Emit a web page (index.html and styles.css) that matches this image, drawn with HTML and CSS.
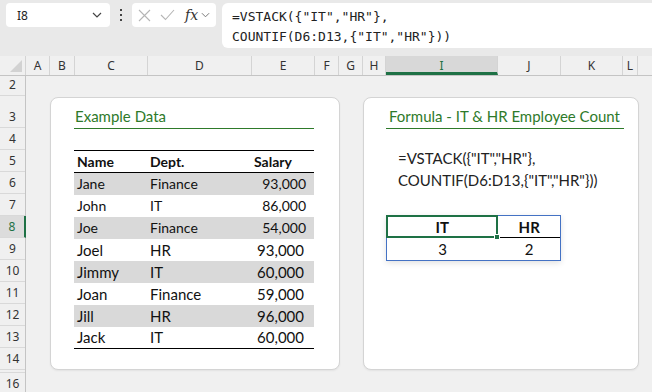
FILE: index.html
```html
<!DOCTYPE html>
<html lang="en">
<head>
    <meta charset="UTF-8">
    <title>VSTACK COUNTIF</title>
    <link rel="stylesheet" href="styles.css">
</head>
<body>
    <div class="topbar">
        <div class="namebox">
            <span>I8</span>
            <svg class="chev" width="10" height="6" viewBox="0 0 10 6"><path d="M1 1l4 4 4-4" fill="none" stroke="#444" stroke-width="1.2"/></svg>
        </div>
        <div class="dots"><i></i><i></i><i></i></div>
        <div class="fxbox">
            <svg width="13" height="13" viewBox="0 0 13 13"><path d="M1 1l11 11M12 1L1 12" stroke="#b5b5b5" stroke-width="1.1"/></svg>
            <svg width="15" height="12" viewBox="0 0 15 12"><path d="M1 6l4.5 4.5L14 1" fill="none" stroke="#b5b5b5" stroke-width="1.1"/></svg>
            <span class="fx">fx</span>
            <svg class="chev" width="9" height="6" viewBox="0 0 10 6"><path d="M1 1l4 4 4-4" fill="none" stroke="#777" stroke-width="1.1"/></svg>
        </div>
        <div class="formula">=VSTACK({"IT","HR"},<br>COUNTIF(D6:D13,{"IT","HR"}))</div>
    </div>

    <div class="colheads">
        <div class="corner"><span></span></div>
        <div class="ch w-a">A</div>
        <div class="ch w-b">B</div>
        <div class="ch w-c">C</div>
        <div class="ch w-d">D</div>
        <div class="ch w-e">E</div>
        <div class="ch w-f">F</div>
        <div class="ch w-g">G</div>
        <div class="ch w-h">H</div>
        <div class="ch w-i active">I</div>
        <div class="ch w-j">J</div>
        <div class="ch w-k">K</div>
        <div class="ch w-l">L</div>
        <div class="ch rest"></div>
    </div>

    <div class="sheet">
        <div class="rowheads">
            <div class="rh h20">2</div>
            <div class="rh h32">3</div>
            <div class="rh">4</div>
            <div class="rh">5</div>
            <div class="rh">6</div>
            <div class="rh">7</div>
            <div class="rh active">8</div>
            <div class="rh">9</div>
            <div class="rh">10</div>
            <div class="rh">11</div>
            <div class="rh">12</div>
            <div class="rh">13</div>
            <div class="rh">14</div>
            <div class="rh h3"></div>
            <div class="rh">16</div>
        </div>

        <div class="canvas">
            <div class="card card-left">
                <div class="title">Example Data</div>
                <table class="data">
                    <thead>
                        <tr><th class="c1">Name</th><th class="c2">Dept.</th><th class="c3">Salary</th></tr>
                    </thead>
                    <tbody>
                        <tr class="sm alt"><td>Jane</td><td>Finance</td><td class="num">93,000</td></tr>
                        <tr class="sm"><td>John</td><td>IT</td><td class="num">86,000</td></tr>
                        <tr class="sm alt"><td>Joe</td><td>Finance</td><td class="num">54,000</td></tr>
                        <tr><td>Joel</td><td>HR</td><td class="num">93,000</td></tr>
                        <tr class="alt"><td>Jimmy</td><td>IT</td><td class="num">60,000</td></tr>
                        <tr><td>Joan</td><td>Finance</td><td class="num">59,000</td></tr>
                        <tr class="alt"><td>Jill</td><td>HR</td><td class="num">96,000</td></tr>
                        <tr><td>Jack</td><td>IT</td><td class="num">60,000</td></tr>
                    </tbody>
                </table>
            </div>

            <div class="card card-right">
                <div class="title">Formula - IT &amp; HR Employee Count</div>
                <div class="code">=VSTACK({"IT","HR"},<br>COUNTIF(D6:D13,{"IT","HR"}))</div>
                <div class="result">
                    <div class="r-head">
                        <div class="cell wide sel">IT<span class="handle"></span></div>
                        <div class="cell">HR</div>
                    </div>
                    <div class="r-row">
                        <div class="cell wide">3</div>
                        <div class="cell">2</div>
                    </div>
                </div>
            </div>
        </div>
    </div>
</body>
</html>
```

FILE: styles.css
```css
* {
    margin: 0;
    padding: 0;
    box-sizing: border-box;
}

body {
    width: 652px;
    height: 392px;
    overflow: hidden;
    background-color: #f0f0f0;
    font-family: "Noto Sans", sans-serif;
    color: #222;
}

/* formula bar */
.topbar {
    height: 56px;
    background-color: #e9e9e9;
    display: flex;
    align-items: flex-start;
    padding: 3px 0 0 6px;
}

.namebox {
    width: 104px;
    height: 24px;
    background-color: #fff;
    border-radius: 4px;
    display: flex;
    align-items: center;
    justify-content: space-between;
    padding: 0 8px 0 11px;
    font-size: 12px;
}

.dots {
    width: 22px;
    height: 24px;
    display: flex;
    flex-direction: column;
    align-items: center;
    justify-content: center;
    gap: 3px;
}

.dots i {
    width: 2px;
    height: 2px;
    background-color: #444;
}

.fxbox {
    width: 84px;
    height: 24px;
    background-color: #fff;
    border-radius: 4px;
    display: flex;
    align-items: center;
    gap: 9px;
    padding-left: 6px;
}

.fxbox .fx {
    font-family: "DejaVu Serif", serif;
    font-style: italic;
    font-size: 14px;
    color: #333;
    margin-left: 1px;
    margin-right: -6px;
}

.formula {
    flex: 1;
    margin-left: 6px;
    height: 45px;
    background-color: #fff;
    border-radius: 6px 0 0 6px;
    padding: 4px 0 0 10px;
    font-family: "DejaVu Sans Mono", monospace;
    font-size: 13px;
    line-height: 20px;
    color: #222;
}

/* column headers */
.colheads {
    display: flex;
    height: 20px;
    background-color: #f0f0f0;
    border-bottom: 1px solid #c4c4c4;
    font-size: 12px;
    color: #333;
}

.corner {
    width: 26px;
    position: relative;
    border-right: 1px solid #d4d4d4;
}

.corner span {
    position: absolute;
    right: 3px;
    bottom: 3px;
    width: 0;
    height: 0;
    border-left: 12px solid transparent;
    border-bottom: 12px solid #d2d2d2;
}

.ch {
    display: flex;
    align-items: center;
    justify-content: center;
    border-right: 1px solid #d4d4d4;
}

.ch.active {
    background-color: #d8d8d8;
    color: #1e7145;
    border-bottom: 3px solid #1e7145;
    padding-top: 3px;
}

.w-a { width: 24px; }
.w-b { width: 25px; }
.w-c { width: 73px; }
.w-d { width: 104px; }
.w-e { width: 63px; }
.w-f { width: 24px; }
.w-g { width: 24px; }
.w-h { width: 23px; }
.w-i { width: 112px; }
.w-j { width: 63px; }
.w-k { width: 62px; }
.w-l { width: 15px; }
.rest { flex: 1; border-right: none; }

/* sheet */
.sheet {
    display: flex;
}

.rowheads {
    width: 26px;
    border-right: 1px solid #c4c4c4;
    font-size: 12px;
    color: #333;
}

.rh {
    height: 22px;
    border-bottom: 1px solid #d9d9d9;
    display: flex;
    align-items: flex-end;
    justify-content: center;
    padding-bottom: 2px;
}

.rh.h20 { height: 20px; }
.rh.h32 { height: 32px; }
.rh.h3 { height: 3px; padding: 0; }

.rh.active {
    background-color: #dcdcdc;
    color: #1e7145;
    border-right: 2px solid #1e7145;
    margin-right: -1px;
}

.canvas {
    flex: 1;
    display: flex;
    gap: 23px;
    padding: 21px 0 0 24px;
}

.card {
    height: 273px;
    background-color: #fff;
    border: 1px solid #d4d4d4;
    border-radius: 8px;
    box-shadow: 0 1px 2px rgba(0, 0, 0, 0.06);
    font-family: "Lato", sans-serif;
}

.card-left {
    width: 290px;
    padding: 8px 0 0 23px;
}

.card-right {
    width: 276px;
    padding: 8px 0 0 22px;
}

.title {
    color: #2e7a2a;
    font-size: 15px;
    height: 23px;
    line-height: 20px;
    border-bottom: 1.5px solid #2e7a2a;
}

.card-left .title {
    width: 240px;
    padding-left: 1px;
}

.card-right .title {
    width: 238px;
    padding-left: 3px;
}

/* data table */
.data {
    margin-top: 21px;
    width: 240px;
    border-collapse: collapse;
    border-top: 1.5px solid #000;
    border-bottom: 1.5px solid #000;
    font-size: 15px;
    color: #111;
}

.data th {
    height: 22px;
    text-align: left;
    font-size: 14px;
    font-weight: bold;
    padding-left: 3px;
    border-bottom: 1.5px solid #000;
}

.data .c1 { width: 73px; }
.data .c2 { width: 104px; }
.data .c3 { width: 63px; }

.data td {
    height: 22px;
    padding: 0 0 0 3px;
}

.data tr.sm td {
    font-size: 14px;
}

.data tr.alt td {
    background-color: #d9d9d9;
}

.data td.num {
    text-align: right;
    padding-right: 10px;
}

.data tr.sm td.num {
    padding-right: 8px;
}

/* formula result */
.code {
    margin: 18px 0 0 12px;
    font-size: 15px;
    line-height: 22px;
    color: #222;
}

.result {
    margin: 24px 0 0 0;
    width: 175px;
    border: 1px solid #4472c4;
    box-shadow: 0 2px 6px rgba(0, 0, 0, 0.12);
    font-size: 15px;
    color: #111;
}

.r-head,
.r-row {
    display: flex;
    height: 22px;
}

.r-head {
    font-weight: bold;
    border-bottom: 1px solid #000;
}

.cell {
    width: 62px;
    display: flex;
    align-items: center;
    justify-content: center;
}

.cell.wide {
    width: 112px;
}

.cell.sel {
    position: relative;
    border: 2px solid #1e7145;
    margin: -1px 0 -1px -1px;
    height: 23px;
    width: 113px;
}

.handle {
    position: absolute;
    right: -4px;
    bottom: -4px;
    width: 6px;
    height: 6px;
    background-color: #1e7145;
    border: 1px solid #fff;
}
```
